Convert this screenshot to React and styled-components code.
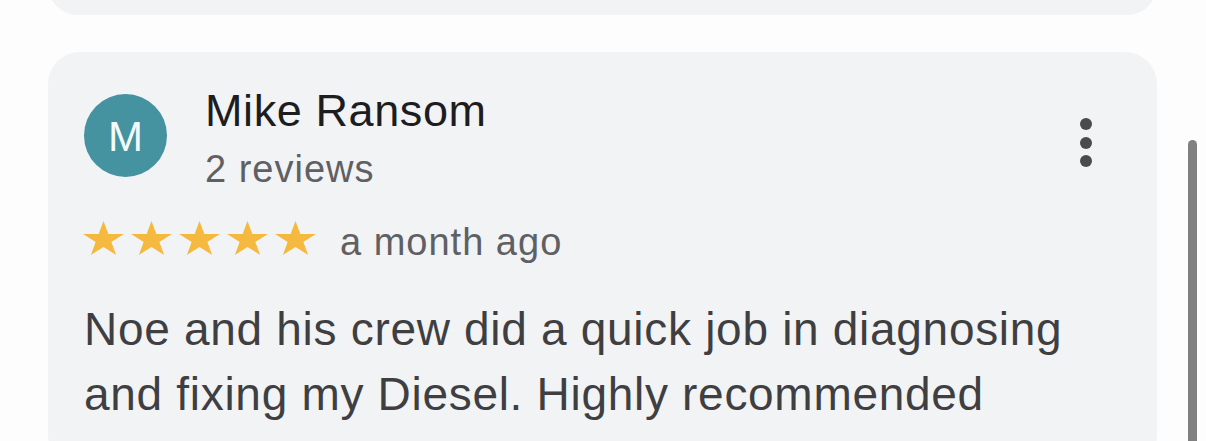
import React from 'react';
import styled, { createGlobalStyle } from 'styled-components';

const GlobalStyle = createGlobalStyle`
  html, body {
    margin: 0;
    padding: 0;
    background: #fdfdfd;
    overflow: hidden;
  }
  body {
    font-family: "Liberation Sans", Arial, sans-serif;
  }
`;

const Page = styled.div`
  width: 1206px;
  height: 441px;
  overflow: hidden;
  padding: 0 49px 0 48px;
  box-sizing: border-box;
  display: flex;
  flex-direction: column;
  gap: 37px;
`;

const Card = styled.div`
  background: #f2f3f5;
  border-radius: 32px;
  flex-shrink: 0;
`;

const PrevCard = styled(Card)`
  height: 60px;
  margin-top: -45px;
`;

const ReviewCard = styled(Card)`
  padding: 34px 36px 40px;
`;

const Header = styled.div`
  display: flex;
  align-items: flex-start;
`;

const Avatar = styled.div`
  width: 83px;
  height: 83px;
  margin-top: 8px;
  padding-top: 2px;
  box-sizing: border-box;
  border-radius: 50%;
  background: #4592a0;
  color: #f4fbfc;
  font-size: 42px;
  display: flex;
  align-items: center;
  justify-content: center;
  flex-shrink: 0;
`;

const Who = styled.div`
  margin-left: 38px;
  display: flex;
  flex-direction: column;
`;

const Name = styled.div`
  font-size: 45px;
  line-height: 50px;
  letter-spacing: 0.6px;
  color: #1d1d1f;
`;

const Meta = styled.div`
  font-size: 38px;
  line-height: 50px;
  letter-spacing: 1px;
  color: #5f6063;
  margin-top: ${p => p.$top || 0}px;
`;

const Menu = styled.div`
  margin-left: auto;
  margin-right: 29px;
  margin-top: 32px;
  display: flex;
  flex-direction: column;
  gap: 6.5px;
`;

const Dot = styled.span`
  width: 12px;
  height: 12px;
  border-radius: 50%;
  background: #4b4b4d;
`;

const RatingRow = styled.div`
  display: flex;
  align-items: flex-start;
  margin-top: 23px;
`;

const Stars = styled.div`
  display: flex;
  gap: 7px;
  margin-top: 4px;
  margin-left: -1px;
  margin-right: 24px;
`;

const Body = styled.p`
  margin: 30px 0 0;
  font-size: 46px;
  line-height: 65px;
  letter-spacing: 0.7px;
  color: #3f3f42;
`;

const Scrollbar = styled.div`
  position: fixed;
  left: 1188px;
  top: 140px;
  width: 9px;
  height: 340px;
  border-radius: 5px;
  background: #808080;
`;

const Star = () => (
  <svg width="41" height="34" viewBox="0 0 40 34" preserveAspectRatio="none">
    <polygon
      fill="#f4b93e"
      points="20,0 24.72,13 40,13 27.63,21 32.37,34 20,25.98 7.63,34 12.37,21 0,13 15.28,13"
    />
  </svg>
);

export default function App() {
  return (
    <>
      <GlobalStyle />
      <Page>
        <PrevCard />
        <ReviewCard>
          <Header>
            <Avatar>M</Avatar>
            <Who>
              <Name>Mike Ransom</Name>
              <Meta $top={8}>2 reviews</Meta>
            </Who>
            <Menu>
              <Dot />
              <Dot />
              <Dot />
            </Menu>
          </Header>
          <RatingRow>
            <Stars>
              {[0, 1, 2, 3, 4].map(i => <Star key={i} />)}
            </Stars>
            <Meta>a month ago</Meta>
          </RatingRow>
          <Body>
            Noe and his crew did a quick job in diagnosing and fixing my Diesel. Highly recommended
          </Body>
        </ReviewCard>
      </Page>
      <Scrollbar />
    </>
  );
}
